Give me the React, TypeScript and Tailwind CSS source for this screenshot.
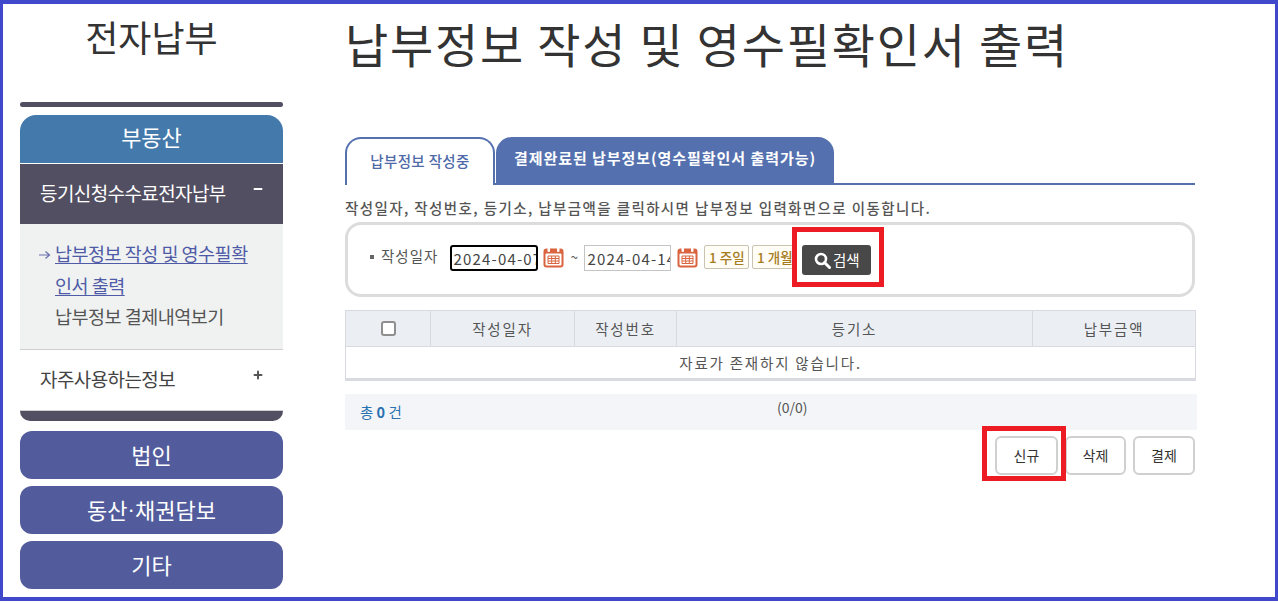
import { Plus, Minus } from 'lucide-react';

const KR = "font-['Noto_Sans_CJK_KR','Noto_Sans',sans-serif]";

function CalendarIcon() {
  return (
    <svg width="21" height="21" viewBox="0 0 21 21" className="shrink-0">
      <rect x="0.5" y="1.5" width="20" height="19" rx="3" fill="#d9643f" />
      <rect x="2.5" y="6.5" width="16" height="12" rx="1" fill="#fff" />
      <rect x="4.5" y="0" width="2.5" height="5" rx="1" fill="#fff" />
      <rect x="14" y="0" width="2.5" height="5" rx="1" fill="#fff" />
      <path d="M5 9h11v7.5H5zM5 11.5h11M5 14h11M8.700 9v7.500M12.300 9v7.500" fill="none" stroke="#d9643f" strokeWidth="1" />
    </svg>
  );
}

function SearchGlyph() {
  return (
    <svg width="17" height="17" viewBox="0 0 17 17" className="shrink-0">
      <circle cx="7" cy="7" r="5" fill="none" stroke="#fff" strokeWidth="2.600" />
      <path d="M10.500 10.500L15.500 15.500" stroke="#fff" strokeWidth="3" strokeLinecap="round" />
    </svg>
  );
}

function SideButton({ children }: { children: React.ReactNode }) {
  return (
    <div className="h-12 pb-[2px] flex items-center justify-center rounded-xl bg-[#525c9c] text-white text-[22px]">
      {children}
    </div>
  );
}

function Sidebar() {
  return (
    <aside className="w-[263px] shrink-0 ml-[17px]">
      <div className="h-[98px] pt-[7px] text-center text-[36px] leading-[50px] text-[#333]">전자납부</div>
      <div className="h-[5px] rounded-sm bg-[#524f63]" />
      <div className="mt-2 h-12 pb-[5px] flex items-center justify-center rounded-t-2xl bg-[#4379ab] text-white text-[22px]">부동산</div>
      <div className="mt-px h-[60px] pb-[2px] flex items-center justify-between pl-5 pr-[19px] bg-[#524f63] text-white text-[19px] tracking-[-0.6px]">
        <span>등기신청수수료전자납부</span>
        <Minus size={12} strokeWidth={4} className="mb-2" />
      </div>
      <div className="h-[126px] pt-[14px] pl-[19px] bg-[#f0f2f2] border-b border-[#cfcfcf] text-[18.500px] leading-[31.500px] tracking-[-0.5px]">
        <div className="flex">
          <svg width="12" height="10" viewBox="0 0 12 10" className="shrink-0 mt-[12px] mr-[4px]">
            <path d="M0 5h10M6.500 1.500L10.500 5l-4 3.500" fill="none" stroke="#6a70ad" strokeWidth="1.200" />
          </svg>
          <a className="text-[#4f5ba6] underline underline-offset-2 w-[200px]">납부정보 작성 및 영수필확인서 출력</a>
        </div>
        <div className="pl-4 text-[#555]">납부정보 결제내역보기</div>
      </div>
      <div className="h-[61px] pb-[2px] flex items-center justify-between pl-5 pr-[19px] border-b border-[#cfcfcf] text-[#444] text-[19px] tracking-[-0.6px]">
        <span>자주사용하는정보</span>
        <Plus size={12} strokeWidth={4} className="mb-2 text-[#555]" />
      </div>
      <div className="h-[10px] rounded-b-2xl bg-[#524f63] mb-[10px]" />
      <div className="flex flex-col gap-[7px]">
        <SideButton>법인</SideButton>
        <SideButton>동산<span className="font-['Liberation_Sans',sans-serif]">·</span>채권담보</SideButton>
        <SideButton>기타</SideButton>
      </div>
    </aside>
  );
}

function Tabs() {
  return (
    <div className="flex h-12 gap-px border-b-2 border-[#5470ae]">
      <div className="w-[150px] h-12 pb-[3px] flex items-center justify-center rounded-t-2xl border-2 border-b-0 border-[#5470ae] bg-white text-[#4f6aa8] text-[14.500px] font-medium tracking-[0.350px]">
        납부정보 작성중
      </div>
      <div className="w-[338px] h-[46px] pb-[3px] flex items-center justify-center rounded-t-2xl bg-[#5470ae] text-white text-[15px] font-bold tracking-[0.950px] whitespace-nowrap">
        결제완료된 납부정보(영수필확인서 출력가능)
      </div>
    </div>
  );
}

function SearchBox() {
  return (
    <div className="relative h-[75px] flex items-start mt-[5px] pt-[20px] pl-[22px] rounded-2xl border-[3px] border-[#dcdcdc] text-[#555] text-[14.500px]">
      <span className="w-[4px] h-[4px] bg-[#666] mt-[10px] mr-[7px]" />
      <span className="tracking-[1px] leading-[22px]">작성일자</span>
      <input
        readOnly
        value="2024-04-07"
        className="ml-[12px] w-[88px] h-[26px] pl-[1px] rounded-[3px] border-2 border-black text-[15px] tracking-[1.200px] text-[#444] outline-none"
      />
      <span className="ml-[5px] mt-[2px]"><CalendarIcon /></span>
      <span className="w-[20px] text-center text-[13px] leading-[24px]">~</span>
      <input
        readOnly
        value="2024-04-14"
        className="w-[87px] h-[26px] pl-[2px] border border-[#c4c4c4] text-[15px] tracking-[1.200px] text-[#444] outline-none"
      />
      <span className="ml-[6px] mt-[2px]"><CalendarIcon /></span>
      <button className="ml-[6px] w-[45px] h-[24px] rounded-[2px] border border-[#c9c3b2] bg-[#fffdf6] text-[#a67c1e] text-[13.500px] font-medium">1 주일</button>
      <button className="ml-[3px] w-[45px] h-[24px] rounded-[2px] border border-[#c9c3b2] bg-[#fffdf6] text-[#a67c1e] text-[13.500px] font-medium whitespace-nowrap overflow-hidden">1 개월</button>
      <button className="ml-[5px] w-[69px] h-[30px] flex items-center justify-center gap-[2px] rounded-[3px] bg-[#484848] text-white text-[14.500px]">
        <SearchGlyph />
        검색
      </button>
      {/* red annotation */}
      <div className="absolute left-[444px] top-[2px] w-[92px] h-[60px] border-[5px] border-[#ed1c24]" />
    </div>
  );
}

function ResultTable() {
  return (
    <table className="mt-[13px] w-[850px] table-fixed border-collapse border-b-[3px] border-[#d8dae0] text-[#555] text-[14.500px] tracking-[1.800px]">
      <colgroup>
        <col className="w-[85px]" />
        <col className="w-[144px]" />
        <col className="w-[102px]" />
        <col className="w-[356px]" />
        <col className="w-[163px]" />
      </colgroup>
      <thead>
        <tr className="h-[36px] bg-[#ebeff4] font-normal">
          <th className="border border-[#d8dae0] font-normal">
            <input type="checkbox" className="block mx-auto w-[15px] h-[15px] appearance-none rounded-[3px] border-2 border-[#8f8f8f] bg-white" />
          </th>
          <th className="border border-[#d8dae0] font-normal">작성일자</th>
          <th className="border border-[#d8dae0] font-normal">작성번호</th>
          <th className="border border-[#d8dae0] font-normal">등기소</th>
          <th className="border border-[#d8dae0] font-normal">납부금액</th>
        </tr>
      </thead>
      <tbody>
        <tr className="h-[33px]">
          <td colSpan={5} className="border-x border-[#d8dae0] text-center">자료가 존재하지 않습니다.</td>
        </tr>
      </tbody>
    </table>
  );
}

function ActionButton({ label, className }: { label: string; className: string }) {
  return (
    <button className={`h-[39px] rounded-md border-2 border-[#d0d0d0] bg-white text-[#333] text-[14px] ${className}`}>
      {label}
    </button>
  );
}

export default function App() {
  return (
    <div className={`${KR} relative h-[601px] w-[1278px] overflow-hidden flex border-t-4 border-x-[3px] border-b-[4px] border-[#4049cc] bg-white`}>
      <Sidebar />
      <main className="ml-[62px] w-[852px] shrink-0">
        <h1 className="h-[133px] pt-[9px] text-[47px] leading-[60px] tracking-[1.750px] text-[#333] font-normal whitespace-nowrap">
          납부정보 작성 및 영수필확인서 출력
        </h1>
        <div className="w-[850px]">
          <Tabs />
          <p className="mt-[14px] h-[18px] leading-[18px] text-[14.500px] font-medium tracking-[1.400px] whitespace-nowrap text-[#555]">
            작성일자, 작성번호, 등기소, 납부금액을 클릭하시면 납부정보 입력화면으로 이동합니다.
          </p>
          <SearchBox />
          <ResultTable />
        </div>
        <div className="relative mt-[13px] h-[36px] w-[852px] bg-[#f4f5f8] pl-[15px] flex items-center text-[14.500px] text-[#2a72b0]">
          <span>총 <b className="font-bold">0</b> 건</span>
          <span className="absolute left-[432px] top-[3px] text-[#555] text-[14px]">(0/0)</span>
        </div>
        <div className="relative mt-[6px] w-[850px] flex justify-end gap-[7px]">
          <ActionButton label="신규" className="w-[63px]" />
          <ActionButton label="삭제" className="w-[61px]" />
          <ActionButton label="결제" className="w-[62px]" />
          {/* red annotation */}
          <div className="absolute left-[637px] top-[-10px] w-[84px] h-[55px] border-[5px] border-[#ed1c24]" />
        </div>
      </main>
    </div>
  );
}
